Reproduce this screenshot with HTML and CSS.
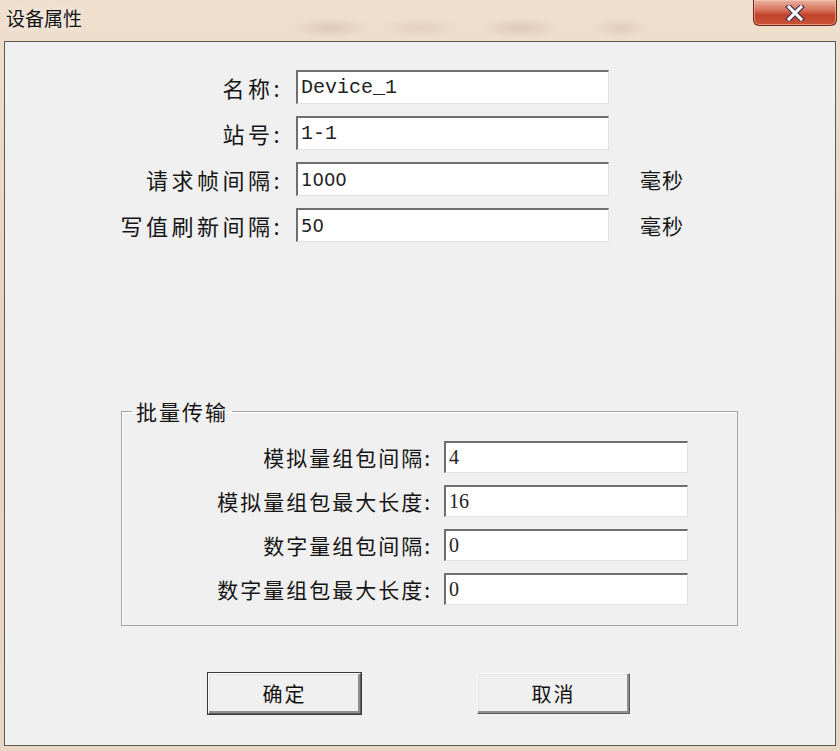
FILE: index.html
```html
<!DOCTYPE html>
<html lang="zh-CN">
<head>
    <meta charset="UTF-8">
    <meta name="viewport" content="width=device-width, initial-scale=1.0">
    <title>设备属性</title>
    <link rel="stylesheet" href="styles.css">
</head>
<body>
    <div class="window">
        <div class="titlebar">
            <span class="title">设备属性</span>
            <button class="close-btn" aria-label="关闭">
                <svg width="20" height="16" viewBox="0 0 20 16">
                    <path d="M4 2 L16 14 M16 2 L4 14" stroke="#4a3a52" stroke-width="5.5" stroke-linecap="square"/>
                    <path d="M4 2 L16 14 M16 2 L4 14" stroke="#ffffff" stroke-width="3" stroke-linecap="square"/>
                </svg>
            </button>
        </div>

        <div class="client">
            <div class="props">
                <label class="lbl">名称:</label>
                <input class="field mono" type="text" value="Device_1">
                <span></span>

                <label class="lbl">站号:</label>
                <input class="field mono" type="text" value="1-1">
                <span></span>

                <label class="lbl">请求帧间隔:</label>
                <input class="field sans" type="text" value="1000">
                <span class="unit">毫秒</span>

                <label class="lbl">写值刷新间隔:</label>
                <input class="field sans" type="text" value="50">
                <span class="unit">毫秒</span>
            </div>

            <fieldset class="group">
                <legend>批量传输</legend>
                <div class="group-rows">
                    <label class="lbl">模拟量组包间隔:</label>
                    <input class="field serif" type="text" value="4">

                    <label class="lbl">模拟量组包最大长度:</label>
                    <input class="field serif" type="text" value="16">

                    <label class="lbl">数字量组包间隔:</label>
                    <input class="field serif" type="text" value="0">

                    <label class="lbl">数字量组包最大长度:</label>
                    <input class="field serif" type="text" value="0">
                </div>
            </fieldset>

            <div class="actions">
                <button class="btn default">确定</button>
                <button class="btn">取消</button>
            </div>
        </div>
    </div>
</body>
</html>
```

FILE: styles.css
```css
* {
    box-sizing: border-box;
}
body {
    margin: 0;
    padding: 0;
    font-family: "Noto Sans CJK SC", "Liberation Sans", sans-serif;
    background: #e6d3bf;
}
.window {
    height: 751px;
    display: flex;
    flex-direction: column;
    background:
        radial-gradient(ellipse 40px 10px at 330px 28px, rgba(140, 110, 90, 0.18), transparent),
        radial-gradient(ellipse 40px 10px at 520px 28px, rgba(140, 110, 90, 0.18), transparent),
        radial-gradient(ellipse 30px 10px at 620px 28px, rgba(140, 110, 90, 0.15), transparent),
        radial-gradient(ellipse 40px 10px at 420px 28px, rgba(140, 110, 90, 0.12), transparent),
        linear-gradient(180deg, #efdfcd 0%, #e6d2bc 45%, #e8d7c5 100%);
}
.titlebar {
    height: 40px;
    display: flex;
    justify-content: space-between;
    align-items: flex-start;
    padding-left: 6px;
}
.title {
    font-size: 19px;
    line-height: 20px;
    margin-top: 8px;
    color: #111;
    text-shadow: 0 0 6px rgba(255, 255, 255, 0.9);
}
.close-btn {
    width: 84px;
    height: 26px;
    margin-right: 3px;
    padding: 0;
    border: 1px solid #6e2416;
    border-top: none;
    border-radius: 0 0 6px 6px;
    background: linear-gradient(180deg, #eab4a2 0%, #d7735b 40%, #c2432a 60%, #c9553a 100%);
    box-shadow: inset 0 0 0 1px rgba(255, 210, 190, 0.5);
    display: flex;
    align-items: center;
    justify-content: center;
}
.client {
    flex: 1;
    margin: 1px 4px 5px 4px;
    border: 1px solid #5e5a55;
    background: #f0f0f0;
    padding-top: 28px;
}
.lbl {
    justify-self: end;
    font-size: 21px;
    letter-spacing: 2px;
    color: #151515;
    line-height: 24px;
}
.props .lbl {
    font-size: 22px;
    letter-spacing: 3.5px;
}
.field {
    height: 100%;
    width: 100%;
    margin: 0;
    padding: 0 0 0 3px;
    background: #fff;
    border-top: 2px solid #6f6f6f;
    border-left: 2px solid #6f6f6f;
    border-right: 1px solid #e2e2e2;
    border-bottom: 1px solid #e2e2e2;
    color: #222;
    font-size: 19px;
    outline: none;
}
.mono {
    font-family: "Liberation Mono", monospace;
    font-size: 20px;
}
.sans {
    font-family: "DejaVu Sans", sans-serif;
    font-size: 18px;
}
.serif {
    font-family: "Liberation Serif", serif;
    font-size: 20px;
}
.props {
    display: grid;
    grid-template-columns: 278px 313px auto;
    grid-auto-rows: 34px;
    column-gap: 13px;
    row-gap: 12px;
    align-items: center;
}
.unit {
    margin-left: 18px;
    font-size: 21px;
    letter-spacing: 1px;
    color: #151515;
}
.group {
    margin: 157px 0 0 116px;
    width: 617px;
    padding: 0 0 20px 0;
    border: 1px solid #a3a3a3;
    box-shadow: inset 1px 1px 0 #fff;
}
.group legend {
    margin-left: 10px;
    padding: 0 4px;
    font-size: 21px;
    line-height: 24px;
    letter-spacing: 2px;
    color: #151515;
}
.group-rows {
    margin-top: 18px;
    display: grid;
    grid-template-columns: 310px 244px;
    grid-auto-rows: 32px;
    column-gap: 12px;
    row-gap: 12px;
    align-items: center;
}
.actions {
    display: flex;
    gap: 116px;
    padding-left: 203px;
    margin-top: 47px;
}
.btn {
    width: 153px;
    height: 41px;
    font-family: inherit;
    font-size: 20px;
    letter-spacing: 2px;
    color: #111;
    background: #f0f0f0;
    border: 1px solid;
    border-color: #fcfcfc #5a5a5a #5a5a5a #fcfcfc;
    box-shadow: inset -2px -2px 0 #8f8f8f, inset 1px 1px 0 #e3e3e3;
}
.btn.default {
    outline: 1px solid #3a3a3a;
    outline-offset: 0;
}
```
